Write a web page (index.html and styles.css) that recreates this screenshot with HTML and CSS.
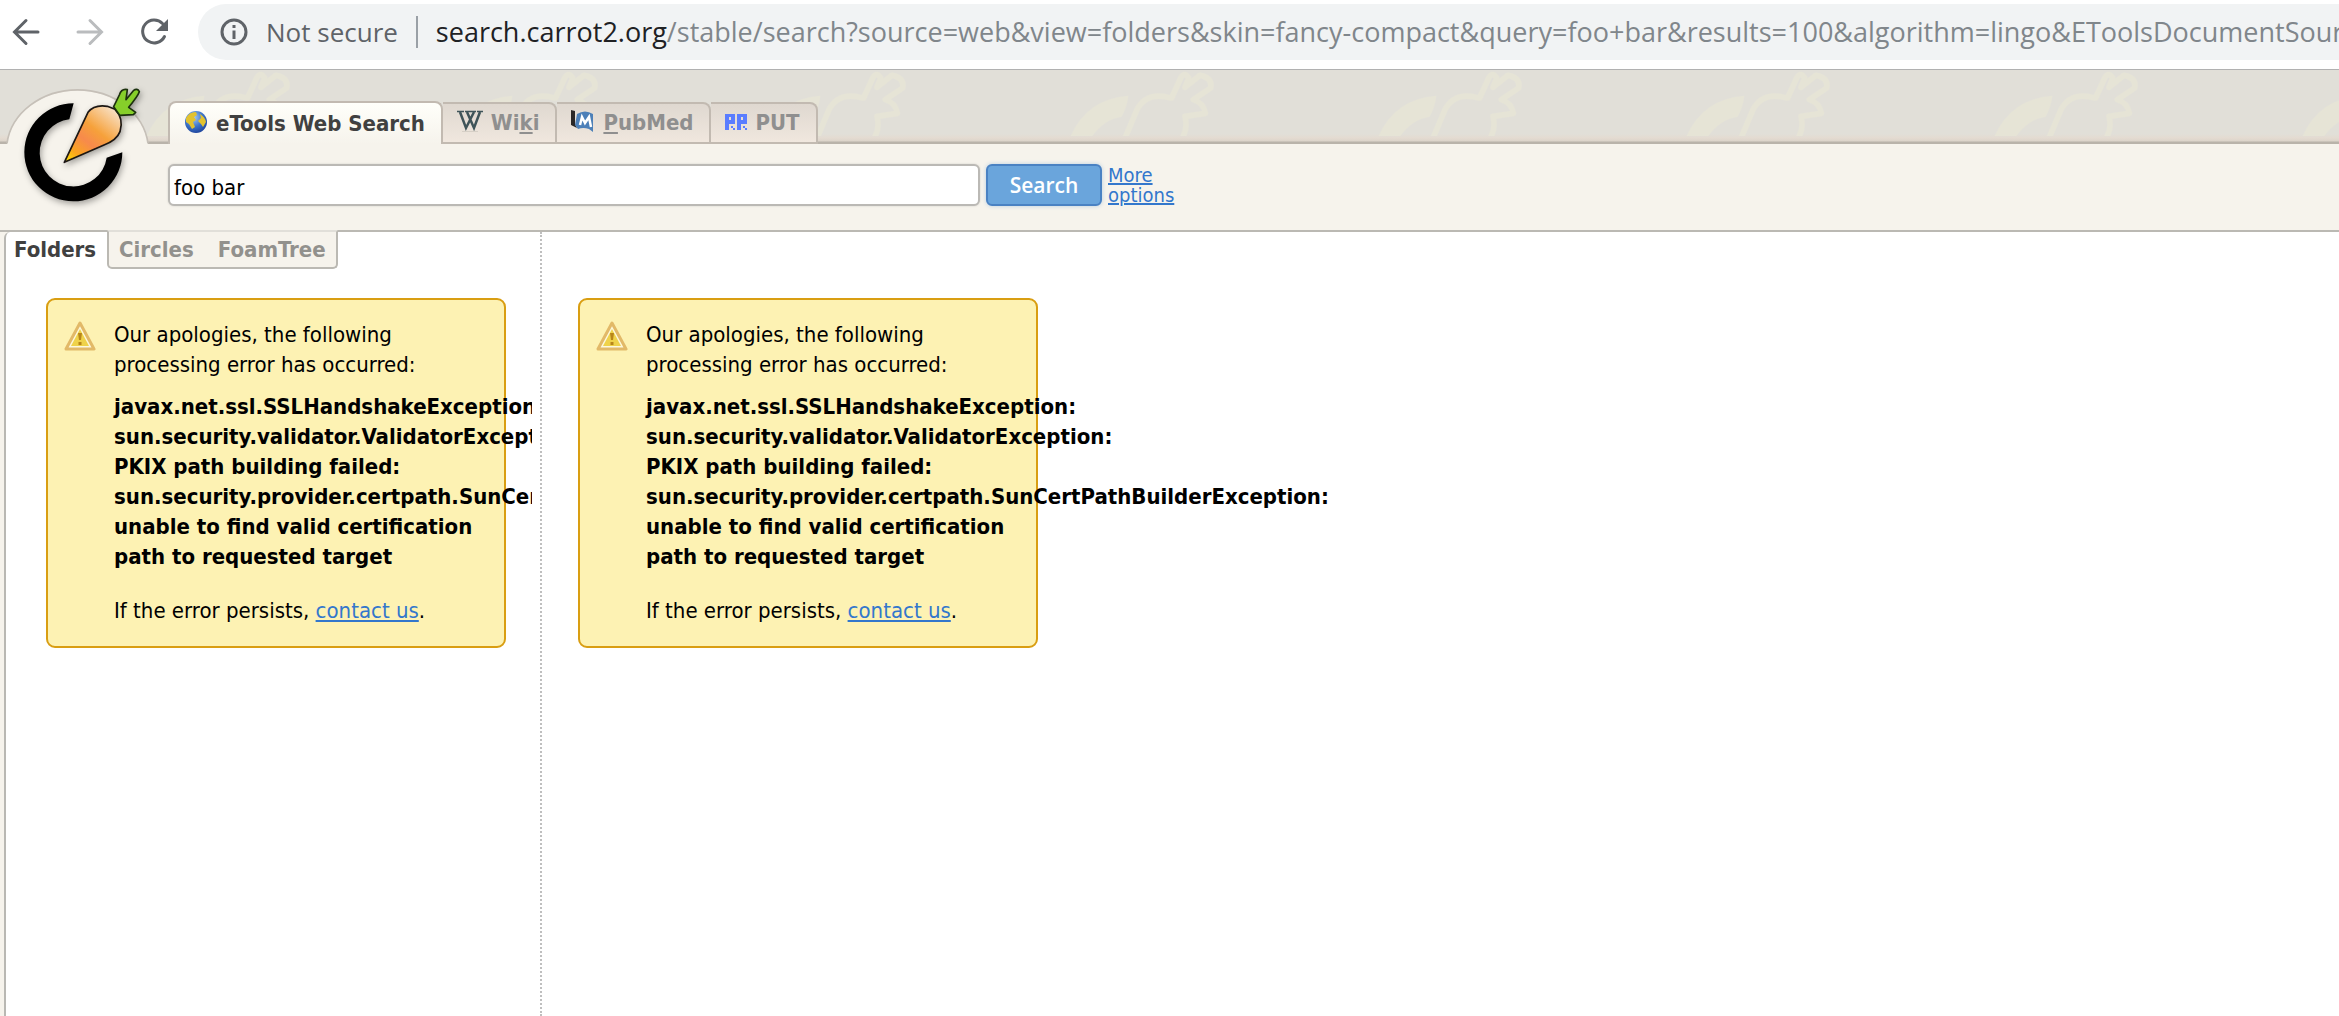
FILE: index.html
```html
<!DOCTYPE html>
<html lang="en">
<head>
<meta charset="utf-8">
<title>foo bar - Carrot2 Clustering Engine</title>
<link rel="stylesheet" href="styles.css">
</head>
<body>
<div class="browser-bar">
  <button class="nav-button" type="button" aria-label="Back">
    <svg width="28" height="28" viewBox="0 0 28 28" fill="none" stroke="#5f6368" stroke-width="3" stroke-linecap="round"><path d="M26 14H3M14 2.500L2.500 14L14 25.500"/></svg>
  </button>
  <button class="nav-button" type="button" aria-label="Forward">
    <svg width="28" height="28" viewBox="0 0 28 28" fill="none" stroke="#babcbe" stroke-width="3" stroke-linecap="round"><path d="M2 14H25M14 2.500L25.500 14L14 25.500"/></svg>
  </button>
  <button class="nav-button" type="button" aria-label="Reload">
    <svg width="28" height="28" viewBox="0 0 28 28" fill="none" stroke="#5f6368" stroke-width="3"><path d="M22.500 5.500A11.500 11.500 0 1 0 24.500 18.500" stroke-linecap="round"/><path d="M28 1V13H16Z" fill="#5f6368" stroke="none"/></svg>
  </button>
  <div class="address">
    <svg class="info" width="28" height="28" viewBox="0 0 28 28" fill="none" stroke="#5f6368" stroke-width="3"><circle cx="14" cy="14" r="12"/><path d="M14 12.500V21M14 7V10"/></svg>
    <span class="security">Not secure</span>
    <span class="url"><span class="host">search.carrot2.org</span>/stable/search?source=web&amp;view=folders&amp;skin=fancy-compact&amp;query=foo+bar&amp;results=100&amp;algorithm=lingo&amp;EToolsDocumentSour</span>
  </div>
</div>

<header class="header">
  <div class="band">
    <svg class="pattern" width="100%" height="66" aria-hidden="true">
      <defs>
        <pattern id="carrots" x="126" y="0" width="308" height="66" patternUnits="userSpaceOnUse">
          <g transform="translate(0 -2) scale(.33333)">
            <path d="M60 208Q110 92 235 83Q232 115 215 146Q160 155 124 208Z" fill="#e6e4d6"/>
            <path d="M226 208L260 127Q285 76 345 86L365 90L392 30Q404 10 416 30L405 58L450 22Q488 30 482 60L430 95Q462 105 466 136L405 145Q414 180 398 208" fill="none" stroke="#e6e4d6" stroke-width="17" stroke-linejoin="round"/>
          </g>
        </pattern>
      </defs>
      <rect width="100%" height="66" fill="url(#carrots)"/>
    </svg>
    <nav class="sources" aria-label="Sources">
      <a class="source active" href="#etools">
        <svg width="24" height="24" viewBox="0 0 24 24"><defs><radialGradient id="sea" cx=".4" cy=".3" r=".7"><stop offset="0" stop-color="#a8cdf2"/><stop offset=".6" stop-color="#3b73c8"/><stop offset="1" stop-color="#2148a0"/></radialGradient></defs><circle cx="12" cy="12" r="11" fill="url(#sea)"/><path d="M2 8Q5 2 12 2L13 5L10 7L12 10L9 12L11 17L8 19L5 14L2 12ZM16 4Q21 7 22 12L19 17L17 14L14 11L17 8Z" fill="#e2c22e"/></svg>
        <span>eTools Web Search</span></a>
      <a class="source" href="#wiki">
        <svg width="26" height="24" viewBox="0 0 26 24" fill="none" stroke="#3f5459"><path d="M3 3L9 19L17 3M10 3L17 19L23 3" stroke-width="2.500"/><path d="M0 2.500H7M8 2.500H19M20 2.500H26" stroke-width="1.500"/><path d="M5 22.500H21" stroke="#d6cfc6"/></svg>
        <span>Wi<u>k</u>i</span></a>
      <a class="source" href="#pubmed">
        <svg width="24" height="24" viewBox="0 0 24 24"><path d="M0 1L4 2V15L6 19L0 16Z" fill="#2b2827"/><path d="M6 5Q14 0 22 5V23L18 20Q12 18 7 20L4 16Z" fill="#4d80b8"/><path d="M9 16L11 8L14 14L18 8L20 18" fill="none" stroke="#fff" stroke-width="2.500"/></svg>
        <span><u>P</u>ubMed</span></a>
      <a class="source" href="#put">
        <svg width="22" height="24" viewBox="1 0 22 24" fill="#5a7dff"><path fill-rule="evenodd" d="M1 5H11V15H5V21H1ZM5 8V11H7V8ZM7 17H9V19H7ZM9 19H11V21H9ZM13 5H23V15H17V21H13ZM17 8V11H19V8ZM19 17H21V19H19ZM21 19H23V21H21Z"/></svg>
        <span>PUT</span></a>
    </nav>
  </div>
  <form class="search" action="#">
    <input class="query" type="text" name="query" value="foo bar" aria-label="Query">
    <button class="submit" type="submit">Search</button>
    <a class="more" href="#options">More options</a>
  </form>
  <a class="logo" href="#home" aria-label="Carrot2">
    <svg width="150" height="145" viewBox="0 0 450 435">
      <defs>
        <linearGradient id="root" x1="0" y1="1" x2=".8" y2="0"><stop offset="0" stop-color="#ffe800"/><stop offset=".2" stop-color="#fba51f"/><stop offset=".42" stop-color="#f78a4c"/><stop offset=".62" stop-color="#f6a13a"/><stop offset="1" stop-color="#f8e0c4"/></linearGradient>
        <filter id="shade" x="-20%" y="-20%" width="150%" height="150%"><feDropShadow dx="4" dy="8" stdDeviation="9" flood-opacity=".35"/></filter>
      </defs>
      <path d="M21 237A213 182 0 0 1 444 237Z" fill="#f6f3ec"/>
      <path d="M21 235A213 182 0 0 1 444 235" fill="none" stroke="#c6c0b8" stroke-width="5"/>
      <g filter="url(#shade)">
        <path d="M221 115A147 147 0 1 0 367 262L320 278A101 101 0 1 1 208 163Z"/>
        <path d="M193 292L264 142Q282 118 322 124L345 133Q372 160 360 200Q350 226 312 240Z" fill="url(#root)" stroke="#1c1712" stroke-width="5" stroke-linejoin="round"/>
        <path d="M341 125L358 90Q364 70 382 74L378 104L400 77Q412 68 418 80Q414 92 386 127L407 142L400 149L359 151Z" fill="#86cf2c" stroke="#1d3010" stroke-width="5" stroke-linejoin="round"/>
      </g>
    </svg>
  </a>
</header>

<main class="results">
  <section class="clusters">
    <nav class="views" aria-label="Views">
      <a class="view current" href="#folders">Folders</a>
      <div class="others"><a class="view" href="#circles">Circles</a><a class="view" href="#foamtree">FoamTree</a></div>
    </nav>
    <div class="pane clipped">
      <div class="alert" role="alert">
        <svg class="warning" width="32" height="32" viewBox="0 0 32 32"><path d="M16 3L30 29H2Z" fill="#fdf8dc" stroke="#e2b968" stroke-width="3" stroke-linejoin="round"/><path d="M16 9L25 26H7Z" fill="#efd24a"/><path d="M14 13H18L17 20H15ZM14.500 22H17.500V25H14.500Z" fill="#b8861a"/></svg>
        <div class="message">
          <p>Our apologies, the following processing error has occurred:</p>
          <strong>javax.net.ssl.SSLHandshakeException: sun.security.validator.ValidatorException: PKIX path building failed: sun.security.provider.certpath.SunCertPathBuilderException: unable to find valid certification path to requested target</strong>
          <p>If the error persists, <a href="#contact">contact us</a>.</p>
        </div>
      </div>
    </div>
  </section>
  <section class="documents">
    <div class="pane">
      <div class="alert" role="alert">
        <svg class="warning" width="32" height="32" viewBox="0 0 32 32"><path d="M16 3L30 29H2Z" fill="#fdf8dc" stroke="#e2b968" stroke-width="3" stroke-linejoin="round"/><path d="M16 9L25 26H7Z" fill="#efd24a"/><path d="M14 13H18L17 20H15ZM14.500 22H17.500V25H14.500Z" fill="#b8861a"/></svg>
        <div class="message">
          <p>Our apologies, the following processing error has occurred:</p>
          <strong>javax.net.ssl.SSLHandshakeException: sun.security.validator.ValidatorException: PKIX path building failed: sun.security.provider.certpath.SunCertPathBuilderException: unable to find valid certification path to requested target</strong>
          <p>If the error persists, <a href="#contact">contact us</a>.</p>
        </div>
      </div>
    </div>
  </section>
</main>
</body>
</html>
```
FILE: styles.css
```css
* { box-sizing: border-box; }

body {
  margin: 0;
  min-height: 100vh;
  display: flex;
  flex-direction: column;
  overflow-x: hidden;
  background: #f6f3ec;
  color: #000;
  font: 22px/30px "DejaVu Sans Condensed", "DejaVu Sans", sans-serif;
}

a { color: #3377cc; }
svg { display: block; flex: none; }
p { margin: 0; }

/* Browser toolbar */
.browser-bar {
  display: flex;
  align-items: center;
  gap: 36px;
  padding: 4px 0 9px 12px;
  background: #fff;
  border-bottom: 1px solid #b1b1b1;
}
.nav-button { padding: 0; border: 0; background: none; }
.address {
  flex: 1;
  min-width: 0;
  height: 56px;
  margin-left: -6px;
  padding-left: 22px;
  display: flex;
  align-items: center;
  border-radius: 28px 0 0 28px;
  background: #f1f3f4;
  color: #80868b;
  font: 27px/32px "Open Sans", "Noto Sans", sans-serif;
  white-space: nowrap;
  overflow: hidden;
}
.security {
  margin-left: 18px;
  padding-right: 18px;
  border-right: 2px solid #9aa0a6;
  color: #5f6368;
  font-size: 26px;
}
.url { margin-left: 18px; }
.host { color: #202124; }

/* Page header */
.header { position: relative; border-bottom: 2px solid #bbb9b3; }
.band {
  position: relative;
  height: 74px;
  padding-left: 168px;
  display: flex;
  align-items: flex-end;
  background: linear-gradient(#e1dfd8 64px, #e4dbd1 68px, #dcd4ca 71px, #b9b3aa 72px);
}
.pattern { position: absolute; top: 0; left: 0; }
.sources { position: relative; display: flex; align-items: flex-end; }
.source {
  height: 42px;
  padding: 0 16px 0 14px;
  display: flex;
  align-items: center;
  gap: 8px;
  border: 2px solid #c2bab1;
  border-left: 0;
  border-radius: 0 8px 0 0;
  background: linear-gradient(#dfd8d0, #f0e7de);
  color: #8f8f8f;
  font-weight: bold;
  text-decoration: none;
}
.source svg { margin-bottom: 4px; }
.source.active {
  height: 43px;
  border-left: 2px solid #c2bab1;
  border-bottom: 0;
  border-radius: 8px 8px 0 0;
  background: linear-gradient(#fffffa, #f6f3ec);
  color: #404040;
}
.logo { position: absolute; top: -5px; left: 0; }
.search {
  display: flex;
  align-items: center;
  gap: 6px;
  padding: 20px 0 24px 168px;
}
.query {
  width: 812px;
  height: 42px;
  padding: 4px 4px 0;
  border: 2px solid #bbb9b5;
  border-radius: 6px;
  background: #fff;
  box-shadow: 0 0 2px #cfccc6;
  font: inherit;
  outline: 0;
}
.submit {
  width: 116px;
  height: 42px;
  padding: 0;
  border: 2px solid #4a82c3;
  border-radius: 6px;
  background: #6aa5dc;
  box-shadow: 0 0 4px #b9cfe2;
  color: #fff;
  font: 600 21px/30px "Open Sans", "Noto Sans", sans-serif;
}
.more { width: 80px; font-size: 20px; line-height: 20px; }

/* Results */
.results {
  flex: 1;
  display: flex;
  margin-left: 4px;
  background: #fff;
  border-left: 2px solid #b9b8b3;
  border-radius: 6px 0 0 0;
}
.clusters { width: 536px; border-right: 2px dotted #bfbfbf; }
.documents { flex: 1; min-width: 0; }
.views { display: flex; font-weight: bold; line-height: 35px; }
.view { color: #92918d; text-decoration: none; }
.view.current { width: 101px; padding-left: 8px; color: #404040; }
.others {
  position: relative;
  display: flex;
  gap: 24px;
  padding: 0 10px;
  margin-top: -2px;
  border: 2px solid #bbb9b3;
  border-top-color: #e1dfd9;
  border-radius: 0 0 5px 5px;
  background: #f6f3ec;
}
.pane { padding: 66px 36px 40px; }
.pane.clipped { margin-right: 8px; padding: 29px 0 40px 40px; overflow: hidden; }
.alert {
  width: 460px;
  padding: 20px 16px;
  display: flex;
  gap: 18px;
  border: 2px solid #d99e12;
  border-radius: 9px;
  background: #fdf2b3;
}
.message { flex: 1; min-width: 0; }
.message strong { display: block; margin: 12px 0 24px; }
```
